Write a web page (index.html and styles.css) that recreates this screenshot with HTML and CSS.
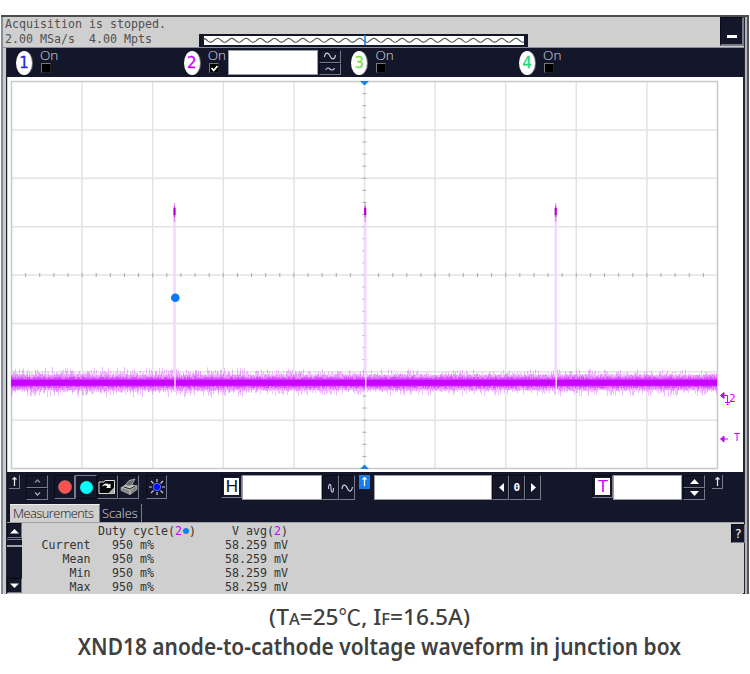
FILE: index.html
```html
<!DOCTYPE html>
<html lang="en">
<head>
  <meta charset="UTF-8">
  <meta name="viewport" content="width=device-width, initial-scale=1.0">
  <title>XND18 waveform</title>
  <link rel="stylesheet" href="styles.css">
</head>
<body>
  <div class="scope">
    <!-- Status bar -->
    <header class="status">
      <div class="status-text">
        <div>Acquisition is stopped.</div>
        <div class="rate">2.00 MSa/s&nbsp; 4.00 Mpts</div>
      </div>
      <svg class="memory" width="329" height="13" viewBox="0 0 329 13">
        <rect width="329" height="13" fill="#14172a"/>
        <rect x="5" y="2" width="320" height="9" fill="#fff"/>
        <path id="memory-wave" fill="none" stroke="#555" stroke-width="1.1"/>
        <path d="M166 1V11" stroke="#1480f0" stroke-width="1.6"/>
      </svg>
      <button class="minimize"><span></span></button>
    </header>

    <!-- Channels -->
    <div class="channels">
      <div class="channel">
        <span class="badge blue">1</span>
        <label>On<i class="check"></i></label>
      </div>
      <div class="channel">
        <span class="badge magenta">2</span>
        <label>On<i class="check"><svg width="9" height="9" viewBox="0 0 9 9"><path d="M1.5 4L3.7 6.5L7.5 2" fill="none" stroke="#fff" stroke-width="1.7"/></svg></i></label>
        <span class="field channel-field"></span>
        <div class="stack">
          <button><svg width="14" height="10" viewBox="0 0 14 10"><path d="M1.500 6C2 1 5.500 1 7 5S12 9 12.500 4" fill="none" stroke="#ccd" stroke-width="1.1"/></svg></button>
          <button><svg width="14" height="8" viewBox="0 0 14 8"><path d="M2.500 5C4 2.500 5.500 2.500 7 4S10.500 5.500 11.500 3" fill="none" stroke="#ccd" stroke-width="1.1"/></svg></button>
        </div>
      </div>
      <div class="channel">
        <span class="badge lime">3</span>
        <label>On<i class="check"></i></label>
      </div>
      <div class="channel">
        <span class="badge green">4</span>
        <label>On<i class="check"></i></label>
      </div>
    </div>

    <!-- Waveform display -->
    <svg class="display" width="735" height="395" viewBox="8 77 735 395">
      <rect x="8" y="77" width="735" height="395" fill="#fff"/>
      <g id="grid"></g>
      <g id="trace"></g>
      <path d="M360 81h9l-4.500 4.500zM360 469h9l-4.500-4.500z" fill="#1480f0"/>
      <circle cx="175.300" cy="297.800" r="4.300" fill="#0878f8"/>
      <g class="markers">
        <path class="head" d="M720.500 395.500l3.500-3v6z"/>
        <path d="M723 395.500h4.500v8M725 402.500h5M726.500 404.500h2"/>
        <text x="729" y="402" font-size="11">2</text>
        <path class="head" d="M720.500 439l3.500-3v6z"/>
        <path d="M723 439h5"/>
        <text x="734" y="441" font-size="10">T</text>
      </g>
    </svg>

    <!-- Controls -->
    <div class="controls">
      <span class="arrow-up">
        <svg width="9" height="11" viewBox="0 0 9 11"><path d="M4.500 10V1.500M2.500 3.500l2-2 2 2" fill="none" stroke="#eee" stroke-width="1.200"/></svg>
      </span>
      <div class="stack position">
        <button><svg width="9" height="6" viewBox="0 0 9 6"><path d="M2 4.500l2.500-2.500L7 4.500" fill="none" stroke="#888c99" stroke-width="1.300"/></svg></button>
        <button><svg width="9" height="6" viewBox="0 0 9 6"><path d="M2 1.500l2.500 2.500L7 1.500" fill="none" stroke="#a8abb5" stroke-width="1.300"/></svg></button>
      </div>
      <div class="tools">
        <button><svg width="20" height="20" viewBox="0 0 20 20"><circle cx="10" cy="10" r="6.500" fill="#ff5050" stroke="#b88" stroke-width=".5"/></svg></button>
        <button class="pressed"><svg width="20" height="20" viewBox="0 0 20 20"><circle cx="10.500" cy="10.500" r="6.500" fill="#00ffff"/></svg></button>
        <button>
          <svg width="20" height="20" viewBox="0 0 20 20">
            <path d="M2 5h5l1-1.500h9.500v13h-15.500z" fill="#080808" stroke="#ddd" stroke-width="1"/>
            <path d="M5 10c1-3.500 4.500-4.500 7-2.500l1.500-1v4.500H9l1.500-1.500c-2-1.500-4-1-5.500.5z" fill="#fff"/>
            <path d="M11 16.500l6-6v6z" fill="#aaa"/>
          </svg>
        </button>
        <button>
          <svg width="20" height="20" viewBox="0 0 20 20">
            <path d="M2 10.500l6-4 10 2-7 5z" fill="#bbb"/>
            <path d="M6 8.500l4-5 6-1.500-4 7z" fill="#666d67" stroke="#ddd" stroke-width=".6"/>
            <path d="M2 10.500l9 3v4l-9-4zM11 13.500l7-5v4l-7 5z" fill="#85857f" stroke="#ddd" stroke-width=".5"/>
            <path d="M5 10l6 2 5-3" fill="none" stroke="#222" stroke-width="1"/>
            <circle cx="9" cy="8" r="1" fill="#36a63c"/><path d="M11 7h2" stroke="#c44bb8"/>
          </svg>
        </button>
      </div>
      <div class="tools sun">
        <button><svg width="20" height="20" viewBox="0 0 20 20"><path d="M10 2v3M10 15v3M2 10h3M15 10h3M4 4l2.500 2.500M13.500 13.500L16 16M16 4l-2.500 2.500M6.500 13.500L4 16" stroke="#c8c8d0" stroke-width="1.200"/><circle cx="10" cy="10" r="3.700" fill="#0010ff" stroke="#9bb0ff" stroke-width=".6"/></svg></button>
      </div>

      <button class="letter h-menu"><span>H</span></button>
      <span class="field h-field"></span>
      <div class="pair">
        <button><svg width="14" height="22" viewBox="0 0 14 22"><path d="M4.500 12C4.500 6 7 6 7 11s2.500 6 2.500 0" fill="none" stroke="#ccd" stroke-width="1.100"/></svg></button>
        <button><svg width="14" height="22" viewBox="0 0 14 22"><path d="M2 12C2.500 7 5.500 7 7.500 11.500S12 14 12.500 10" fill="none" stroke="#ccd" stroke-width="1.200"/></svg></button>
      </div>
      <span class="arrow-up active">
        <svg width="9" height="11" viewBox="0 0 9 11"><path d="M4.500 10V1.500M2.500 3.500l2-2 2 2" fill="none" stroke="#fff" stroke-width="1.200"/></svg>
      </span>
      <span class="field delay-field"></span>
      <div class="pair delay">
        <button><svg width="14" height="22" viewBox="0 0 14 22"><path d="M10 6v9l-5-4.500z" fill="#fff"/></svg></button>
        <button class="zero">0</button>
        <button><svg width="14" height="22" viewBox="0 0 14 22"><path d="M5 6v9l5-4.500z" fill="#fff"/></svg></button>
      </div>

      <button class="letter t-menu"><span>T</span></button>
      <span class="field t-field"></span>
      <div class="stack level">
        <button><svg width="11" height="7" viewBox="0 0 11 7"><path d="M1 6h9L5.500 1z" fill="#fff"/></svg></button>
        <button><svg width="11" height="7" viewBox="0 0 11 7"><path d="M1 1h9L5.500 6z" fill="#fff"/></svg></button>
      </div>
      <span class="arrow-up last">
        <svg width="9" height="11" viewBox="0 0 9 11"><path d="M4.500 10V1.500M2.500 3.500l2-2 2 2" fill="none" stroke="#eee" stroke-width="1.200"/></svg>
      </span>
    </div>

    <nav class="tabs">
      <span class="tab selected">Measurements</span>
      <span class="tab">Scales</span>
    </nav>

    <!-- Measurements -->
    <section class="results">
      <div class="scrollbar">
        <button><svg width="9" height="6" viewBox="0 0 9 6"><path d="M0 5.500h9L4.500 1z" fill="#fff"/></svg></button>
        <span class="thumb"></span>
        <button><svg width="9" height="6" viewBox="0 0 9 6"><path d="M0 .5h9L4.500 5z" fill="#fff"/></svg></button>
      </div>
      <table>
        <tr><th></th><td>Duty cycle(<b>2</b><i class="dot"></i>)</td><td class="vavg-head">V avg(<b>2</b>)</td></tr>
        <tr><th>Current</th><td class="duty">950 m%</td><td>58.259 mV</td></tr>
        <tr><th>Mean</th><td class="duty">950 m%</td><td>58.259 mV</td></tr>
        <tr><th>Min</th><td class="duty">950 m%</td><td>58.259 mV</td></tr>
        <tr><th>Max</th><td class="duty">950 m%</td><td>58.259 mV</td></tr>
      </table>
      <button class="help">?</button>
    </section>
  </div>

  <div class="caption">
    <p class="conditions">(T<small>A</small>=25<span class="unit">℃</span>, I<small>F</small>=16.5A)</p>
    <p class="title">XND18 anode-to-cathode voltage waveform in junction box</p>
  </div>

  <script src="scope.js"></script>
</body>
</html>
```
FILE: styles.css
```css
:root {
  --panel: #14172a;
  --gray: #cfcfcf;
  --magenta: #c800ff;
  --bevel: #777a88;
  --text: #404040;
}

* {
  box-sizing: border-box;
}

body {
  margin: 0;
  padding-top: 15px;
  background: #fff;
  font-family: "DejaVu Sans Mono", monospace;
  overflow: hidden;
}

button {
  display: flex;
  align-items: center;
  justify-content: center;
  padding: 0;
  border: 1px solid;
  border-color: #090b16 var(--bevel) var(--bevel) #090b16;
  background: var(--panel);
  color: #fff;
  font-family: inherit;
}

svg {
  display: block;
  flex: none;
}

.scope {
  width: 748px;
  height: 579px;
  margin-left: 1px;
  padding-left: 6px;
  padding-right: 5px;
  border-top: 2px solid #4b4d50;
  background: linear-gradient(to right, #858b97 0 2px, #c8cacc 2px 5px, #25272e 5px 6px, var(--gray) 6px 742px, #25272e 742px 744px, #b4b4c0 744px 746px, #55555f 746px);
}

/* status bar */
.status {
  display: flex;
  height: 31px;
  margin-left: -4px;
  border-bottom: 1px solid #8b8e98;
  background: var(--gray);
}

.status-text {
  width: 196px;
  padding-left: 2px;
  color: #505050;
  font-size: 11.63px;
  line-height: 15px;
  white-space: nowrap;
}

.memory {
  margin-top: 17px;
}

.minimize {
  align-self: flex-start;
  width: 24px;
  height: 29px;
  margin-left: auto;
  border-width: 1px 2px 2px 1px;
}

.minimize span {
  width: 10px;
  height: 3px;
  margin-top: 10px;
  background: #fff;
}

/* channels */
.channels {
  display: flex;
  height: 29px;
  padding-left: 9px;
  background: var(--panel);
}

.channel {
  display: flex;
  width: 167.7px;
}

.badge {
  width: 16px;
  height: 24px;
  margin: 3px 8px 0 0;
  border-radius: 50%;
  background: #fff;
  box-shadow: 1px 0 0 #777;
  font: 15px/24px "DejaVu Sans", sans-serif;
  text-align: center;
  -webkit-text-stroke: .3px currentColor;
}

.blue { color: #2626dd; }
.magenta { color: var(--magenta); }
.lime { color: #7ce243; }
.green { color: #25d980; }

.channel label {
  width: 20px;
  color: #dedee4;
  font: 300 13.5px/15px "Open Sans", sans-serif;
}

.check {
  display: block;
  width: 10px;
  height: 10px;
  margin-left: 1px;
  border: 1px solid;
  border-color: #777 #222 #222 #777;
  background: #000;
}

.field {
  display: block;
  border: 1px solid #9a9ca6;
  background: #fff;
}

.channel-field {
  width: 90px;
  height: 25px;
  margin-top: 2px;
}

.stack button {
  width: 22px;
  height: 12.5px;
}

.channel .stack {
  margin: 2px 0 0 1px;
}

.display {
  margin-left: 1px;
}

.markers path {
  fill: none;
  stroke: var(--magenta);
  stroke-width: 1;
}

.markers .head {
  fill: var(--magenta);
}

.markers text {
  fill: var(--magenta);
  font-family: "DejaVu Sans Mono", monospace;
}

/* controls */
.controls {
  display: flex;
  align-items: flex-start;
  height: 32px;
  padding: 3px 0 0 2px;
  background: var(--panel);
}

.controls .stack,
.tools,
.pair {
  display: flex;
}

.controls .stack {
  flex-direction: column;
}

.arrow-up {
  width: 11px;
  height: 14px;
  padding: 1px;
  border-right: 1px solid var(--bevel);
  border-bottom: 1px solid var(--bevel);
}

.arrow-up.active {
  margin-left: 4px;
  border-color: #1480f0;
  background: #1480f0;
}

.position {
  margin-left: 6px;
}

.tools {
  margin-left: 6px;
}

.tools button {
  width: 21.3px;
  height: 24px;
}

.tools .pressed {
  border-color: var(--bevel) #090b16 #090b16 var(--bevel);
}

.sun {
  margin-left: 7px;
}

.letter {
  width: 21px;
  height: 23px;
  font: 17px/17px "Liberation Sans", sans-serif;
}

.letter span {
  width: 15px;
  height: 17px;
  background: #fff;
  color: #111;
}

.h-menu {
  margin-left: 54px;
}

.t-menu {
  margin-left: 51px;
}

.t-menu span {
  color: var(--magenta);
}

.h-field {
  width: 80px;
  height: 25px;
}

.delay-field {
  width: 118px;
  height: 25px;
  margin-left: 4px;
}

.t-field {
  width: 69px;
  height: 25px;
}

.pair button {
  width: 16.5px;
  height: 25px;
}

.delay button {
  width: 16.3px;
}

.zero {
  font-size: 11px;
  font-weight: bold;
}

.level {
  margin-left: 1px;
}

.last {
  margin-left: 7px;
}

/* tabs */
.tabs {
  display: flex;
  height: 18px;
  padding-left: 3px;
  background: var(--panel);
}

.tab {
  width: 42px;
  padding-left: 2px;
  border-right: 1px solid var(--bevel);
  color: #ddd;
  font: 300 12.8px/18px "Open Sans", sans-serif;
}

.tab.selected {
  width: 90px;
  padding-left: 3px;
  border-top: 1px solid #eee;
  background: var(--gray);
  color: #111;
  letter-spacing: -.5px;
  line-height: 17px;
}

/* measurement results */
.results {
  display: flex;
  height: 71px;
  border-top: 1px solid #a0a2a8;
  background: var(--gray);
}

.scrollbar {
  display: flex;
  flex-direction: column;
  justify-content: space-between;
  width: 15px;
  background: var(--panel);
}

.scrollbar button {
  height: 15px;
}

.thumb {
  height: 8px;
  margin-bottom: 31px;
  border-top: 1px solid var(--bevel);
  border-bottom: 2px solid #a0a2a8;
}

.results table {
  align-self: flex-start;
  border-spacing: 0;
  table-layout: fixed;
  width: 290px;
  margin-top: 1px;
  color: #333;
  font-size: 11.63px;
  line-height: 14px;
}

.results th,
.results td {
  height: 14px;
  padding: 0;
  font-weight: normal;
  text-align: left;
  white-space: nowrap;
}

.results th {
  width: 76px;
  padding-right: 7.5px;
  text-align: right;
}

.results td:nth-child(2) {
  width: 127px;
}

.results .duty {
  padding-left: 14px;
}

.results .vavg-head {
  padding-left: 7px;
}

.results b {
  color: var(--magenta);
  font-weight: normal;
}

.dot {
  display: inline-block;
  width: 6px;
  height: 6px;
  margin: 0 .5px 1px;
  border-radius: 50%;
  background: #1480f0;
}

.help {
  width: 14px;
  height: 19px;
  margin: 1px -1px 0 auto;
  font-size: 12px;
}

/* caption */
.caption {
  display: flex;
  flex-direction: column;
  align-items: center;
  padding-top: 8px;
  color: var(--text);
  font-family: "Noto Sans", "Noto Sans CJK SC", sans-serif;
}

.caption p {
  margin: 0;
  line-height: 28px;
  white-space: nowrap;
}

.caption .conditions {
  margin-right: 11px;
  font-size: 22px;
  font-weight: 500;
  transform: scaleX(1.03);
}

.conditions small {
  font-size: 16px;
}

.unit {
  font-family: "Noto Sans CJK SC", sans-serif;
  font-weight: 400;
  line-height: 1;
}

.caption .title {
  margin-left: 9px;
  font-size: 22.5px;
  font-weight: 600;
  transform: scaleX(.93);
}
```
FILE: scope.js
```js
const NS = 'http://www.w3.org/2000/svg';
const grid = document.getElementById('grid');
const trace = document.getElementById('trace');

function addPath(parent, d, stroke, width, opacity = 1) {
  const path = document.createElementNS(NS, 'path');
  path.setAttribute('d', d);
  path.setAttribute('fill', 'none');
  path.setAttribute('stroke', stroke);
  path.setAttribute('stroke-width', width);
  path.setAttribute('opacity', opacity);
  parent.appendChild(path);
}

// Sine wave in the memory bar
let wave = 'M5 6';
for (let x = 5; x <= 325; x++) {
  wave += `L${x} ${(6.3 + Math.sin((x - 8) / 14.2 * 2 * Math.PI) * 1.9).toFixed(2)}`;
}
document.getElementById('memory-wave').setAttribute('d', wave);

// Graticule, 10 x 8 divisions
const left = 11.5, right = 717.5, top0 = 81.5, bottom = 468.5;
const dx = (right - left) / 10, dy = (bottom - top0) / 8;
let lines = '';
for (let i = 1; i < 10; i++) lines += `M${left + i * dx} ${top0}V${bottom}`;
for (let i = 1; i < 8; i++) lines += `M${left} ${top0 + i * dy}H${right}`;
addPath(grid, lines, '#e3e3e3', 1.5);
addPath(grid, `M${left} ${top0}H${right}V${bottom}H${left}Z`, '#c6cbc8', 1.5);

let ticks = '';
for (let i = 1; i < 50; i++) ticks += `M${left + i * dx / 5} 273v4`;
for (let i = 1; i < 32; i++) ticks += `M362.5 ${top0 + i * dy / 4}h4`;
addPath(grid, ticks, '#aaa', 1);

// Repeatable noise for the baseline
let seed = 7;
function random() {
  seed = (seed * 16807) % 2147483647;
  return seed / 2147483647;
}

let wide = '', mid = '', near = '';
for (let x = 11.5; x < 717; x++) {
  const amp = x < 250 ? 1 : 0.8;
  const peak = () => Math.pow(random(), 3) * 8 * amp;
  wide += `M${x} ${(375 - peak()).toFixed(1)}V${(390 + peak()).toFixed(1)}`;
  mid += `M${x} ${(377.5 - random() * 5 * amp).toFixed(1)}V${(387.5 + random() * 5 * amp).toFixed(1)}`;
  near += `M${x} ${(379 - random() * 2.5).toFixed(1)}V${(386 + random() * 2.5).toFixed(1)}`;
}
addPath(trace, wide, '#c800ff', 1, 0.25);
addPath(trace, mid, '#c800ff', 1, 0.25);
addPath(trace, near, '#c800ff', 1, 0.45);
addPath(trace, 'M11 382.8H717', '#c800ff', 6);

// Spikes
[174.5, 365.2, 555.7].forEach(x => {
  addPath(trace, `M${x} 214V377`, '#f3d8fd', 2.6);
  addPath(trace, `M${x} 203V222`, '#d27be8', 1.3, 0.7);
  addPath(trace, `M${x} 208V215`, '#b800d8', 2.2);
  addPath(trace, `M${x} 206V217`, '#b800d8', 1.2, 0.7);
  addPath(trace, `M${x + 0.5} 377V391`, '#f9dfff', 1.5);
});
```
